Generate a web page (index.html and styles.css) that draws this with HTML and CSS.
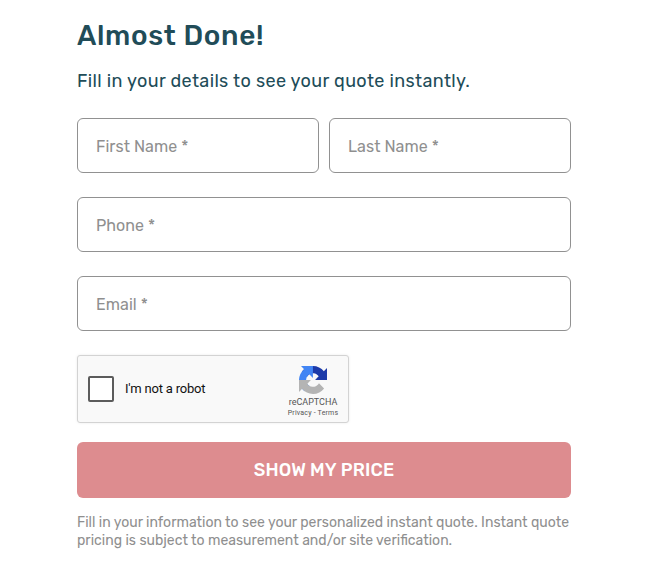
FILE: index.html
```html
<!DOCTYPE html>
<html lang="en">
<head>
  <meta charset="UTF-8">
  <meta name="viewport" content="width=device-width, initial-scale=1.0">
  <title>Almost Done!</title>
  <link rel="stylesheet" href="styles.css">
</head>
<body>
  <main class="quote">
    <h1 class="quote-title">Almost Done!</h1>
    <p class="quote-lead">Fill in your details to see your quote instantly.</p>
    <form class="quote-form">
      <div class="name-row">
        <input class="field field-first" type="text" placeholder="First Name *" aria-label="First Name">
        <input class="field field-last" type="text" placeholder="Last Name *" aria-label="Last Name">
      </div>
      <input class="field field-phone" type="tel" placeholder="Phone *" aria-label="Phone">
      <input class="field field-email" type="email" placeholder="Email *" aria-label="Email">
      <div class="captcha">
        <label class="captcha-check">
          <input class="captcha-box" type="checkbox">
          <span class="captcha-label">I'm not a robot</span>
        </label>
        <div class="captcha-brand">
          <svg class="captcha-logo" viewBox="0 0 64 64" aria-hidden="true">
            <path fill="#1c3aa9" d="M64 31.955l-.033-1.37V4.687l-7.16 7.16C50.948 4.674 42.033.093 32.05.093c-10.4 0-19.622 4.96-25.458 12.64l11.736 11.86a15.55 15.55 0 0 1 4.754-5.334c2.05-1.6 4.952-2.906 8.968-2.906.485 0 .86.057 1.135.163 4.976.393 9.288 3.14 11.828 7.124l-8.307 8.307L64 31.953"/>
            <path fill="#4285f4" d="M31.862.094l-1.37.033H4.594l7.16 7.16C4.58 13.147 0 22.06 0 32.046c0 10.4 4.96 19.622 12.64 25.458L24.5 45.768a15.55 15.55 0 0 1-5.334-4.754c-1.6-2.05-2.906-4.952-2.906-8.968 0-.485.057-.86.163-1.135.393-4.976 3.14-9.288 7.124-11.828l8.307 8.307L31.86.095"/>
            <path fill="#b4b4b4" d="M.001 32.045l.033 1.37v25.898l7.16-7.16c5.86 7.173 14.774 11.754 24.76 11.754 10.4 0 19.622-4.96 25.458-12.64l-11.736-11.86a15.55 15.55 0 0 1-4.754 5.334c-2.05 1.6-4.952 2.906-8.968 2.906-.485 0-.86-.057-1.135-.163-4.976-.393-9.288-3.14-11.828-7.124l8.307-8.307c-10.522.04-22.4.066-27.295-.005"/>
          </svg>
          <div class="captcha-name">reCAPTCHA</div>
          <div class="captcha-links">Privacy - Terms</div>
        </div>
      </div>
      <button class="submit" type="button"><span class="submit-text">SHOW MY PRICE</span></button>
    </form>
    <p class="disclaimer">Fill in your information to see your personalized instant quote. Instant quote<br><span class="disclaimer-end">pricing is subject to measurement and/or site verification.</span></p>
  </main>
</body>
</html>
```

FILE: styles.css
```css
* { margin: 0; padding: 0; box-sizing: border-box; }
body {
  background: #fff;
  font-family: Rubik, Roboto, sans-serif;
}
.quote {
  width: 494px;
  margin-left: 77px;
  padding-top: 18px;
}
.quote-title {
  color: #214c58;
  font-size: 28px;
  font-weight: 500;
  line-height: 35px;
  letter-spacing: 0.65px;
}
.quote-lead {
  margin-top: 16px;
  color: #214c58;
  font-size: 18px;
  line-height: 24px;
  letter-spacing: 0.36px;
}
.quote-form {
  display: flex;
  flex-direction: column;
  gap: 24px;
  margin-top: 25px;
}
.name-row {
  display: grid;
  grid-template-columns: 1fr 1fr;
  gap: 10px;
}
.field {
  width: 100%;
  height: 55px;
  padding: 2px 18px 0;
  border: 1px solid #919191;
  border-radius: 6px;
  background: #fff;
  color: #333;
  font-family: inherit;
  font-size: 16px;
  letter-spacing: 0.05px;
}
.field::placeholder { color: #8f8f8f; opacity: 1; }
.captcha {
  display: flex;
  justify-content: space-between;
  width: 272px;
  height: 68px;
  border: 1px solid #d3d3d3;
  border-radius: 3px;
  background: #f9f9f9;
  box-shadow: 0 0 3px rgba(0,0,0,0.08);
}
.captcha-check {
  display: flex;
  align-items: center;
  padding: 0 0 1px 10px;
}
.captcha-box {
  appearance: none;
  width: 26px;
  height: 26px;
  border: 2px solid #5c5c5c;
  border-radius: 2px;
  background: #fff;
}
.captcha-label {
  margin-left: 11px;
  color: #111;
  font-family: Roboto, sans-serif;
  font-size: 13px;
  letter-spacing: -0.2px;
}
.captcha-brand {
  display: flex;
  flex-direction: column;
  align-items: center;
  width: 70px;
  padding-top: 10px;
  color: #555;
  font-family: Roboto, sans-serif;
}
.captcha-logo { width: 28px; height: 28px; }
.captcha-name { margin-top: 2px; font-size: 9px; line-height: 12px; }
.captcha-links { font-size: 7px; line-height: 11px; letter-spacing: 0.2px; }
.submit {
  height: 56px;
  margin-top: -5px;
  border: none;
  border-radius: 6px;
  background: #dd8c8f;
  color: #fff;
  font-family: inherit;
  font-size: 18px;
  font-weight: 500;
  letter-spacing: 0.15px;
}
.disclaimer {
  margin-top: 16px;
  color: #8f8f8f;
  font-size: 14px;
  line-height: 18px;
  white-space: nowrap;
}
```
